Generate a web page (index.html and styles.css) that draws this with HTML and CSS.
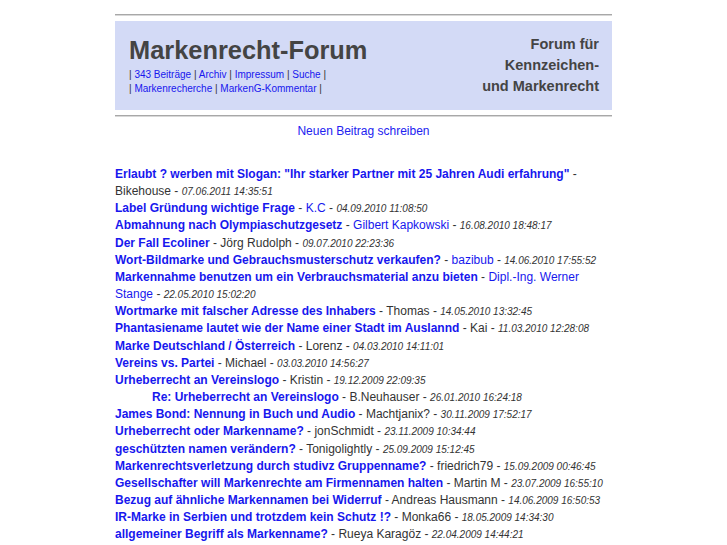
FILE: index.html
```html
<!DOCTYPE html>
<html lang="de">
<head>
<meta charset="utf-8">
<title>Markenrecht-Forum</title>
<link rel="stylesheet" href="styles.css">
</head>
<body>
<div class="page">
  <div class="rule"></div>
  <div class="header">
    <div class="brand">
      <div class="title">Markenrecht-Forum</div>
      <div class="nav">| <a href="#">343 Beiträge</a> | <a href="#">Archiv</a> | <a href="#">Impressum</a> | <a href="#">Suche</a> |<br>| <a href="#">Markenrecherche</a> | <a href="#">MarkenG-Kommentar</a> |</div>
    </div>
    <div class="tagline">Forum für<br>Kennzeichen-<br>und Markenrecht</div>
  </div>
  <div class="rule"></div>
  <div class="new"><a href="#">Neuen Beitrag schreiben</a></div>
  <ul class="posts">
    <li><a class="t" href="#">Erlaubt ? werben mit Slogan: "Ihr starker Partner mit 25 Jahren Audi erfahrung"</a> - Bikehouse - <i>07.06.2011 14:35:51</i></li>
    <li><a class="t" href="#">Label Gründung wichtige Frage</a> - <a href="#">K.C</a> - <i>04.09.2010 11:08:50</i></li>
    <li><a class="t" href="#">Abmahnung nach Olympiaschutzgesetz</a> - <a href="#">Gilbert Kapkowski</a> - <i>16.08.2010 18:48:17</i></li>
    <li><a class="t" href="#">Der Fall Ecoliner</a> - Jörg Rudolph - <i>09.07.2010 22:23:36</i></li>
    <li><a class="t" href="#">Wort-Bildmarke und Gebrauchsmusterschutz verkaufen?</a> - <a href="#">bazibub</a> - <i>14.06.2010 17:55:52</i></li>
    <li><a class="t" href="#">Markennahme benutzen um ein Verbrauchsmaterial anzu bieten</a> - <a href="#">Dipl.-Ing. Werner Stange</a> - <i>22.05.2010 15:02:20</i></li>
    <li><a class="t" href="#">Wortmarke mit falscher Adresse des Inhabers</a> - Thomas - <i>14.05.2010 13:32:45</i></li>
    <li><a class="t" href="#">Phantasiename lautet wie der Name einer Stadt im Auslannd</a> - Kai - <i>11.03.2010 12:28:08</i></li>
    <li><a class="t" href="#">Marke Deutschland / Österreich</a> - Lorenz - <i>04.03.2010 14:11:01</i></li>
    <li><a class="t" href="#">Vereins vs. Partei</a> - Michael - <i>03.03.2010 14:56:27</i></li>
    <li><a class="t" href="#">Urheberrecht an Vereinslogo</a> - Kristin - <i>19.12.2009 22:09:35</i></li>
    <li class="reply"><a class="t" href="#">Re: Urheberrecht an Vereinslogo</a> - B.Neuhauser - <i>26.01.2010 16:24:18</i></li>
    <li><a class="t" href="#">James Bond: Nennung in Buch und Audio</a> - Machtjanix? - <i>30.11.2009 17:52:17</i></li>
    <li><a class="t" href="#">Urheberrecht oder Markenname?</a> - jonSchmidt - <i>23.11.2009 10:34:44</i></li>
    <li><a class="t" href="#">geschützten namen verändern?</a> - Tonigolightly - <i>25.09.2009 15:12:45</i></li>
    <li><a class="t" href="#">Markenrechtsverletzung durch studivz Gruppenname?</a> - friedrich79 - <i>15.09.2009 00:46:45</i></li>
    <li><a class="t" href="#">Gesellschafter will Markenrechte am Firmennamen halten</a> - Martin M - <i>23.07.2009 16:55:10</i></li>
    <li><a class="t" href="#">Bezug auf ähnliche Markennamen bei Widerruf</a> - Andreas Hausmann - <i>14.06.2009 16:50:53</i></li>
    <li><a class="t" href="#">IR-Marke in Serbien und trotzdem kein Schutz !?</a> - Monka66 - <i>18.05.2009 14:34:30</i></li>
    <li><a class="t" href="#">allgemeiner Begriff als Markenname?</a> - Rueya Karagöz - <i>22.04.2009 14:44:21</i></li>
  </ul>
</div>
</body>
</html>
```

FILE: styles.css
```css
html, body {
  margin: 0;
  padding: 0;
  background: #fff;
}
body {
  font-family: "Liberation Sans", Arial, sans-serif;
  color: #333;
}
a {
  color: #1717ee;
  text-decoration: none;
}
.page {
  width: 497px;
  margin: 0 auto;
  padding-top: 14px;
}
.rule {
  border-top: 1px solid #a8a8a8;
  border-bottom: 1px solid #d8d8d8;
  height: 0;
}
.header {
  margin: 5px 0 5px;
  background: #d3daf6;
  height: 89px;
  display: flex;
  justify-content: space-between;
  align-items: center;
  padding: 0 13px 0 14px;
}
.title {
  font-size: 25.4px;
  font-weight: bold;
  color: #444;
  line-height: 30px;
}
.nav {
  font-size: 10px;
  line-height: 14px;
  margin-top: 3px;
  color: #333;
}
.tagline {
  text-align: right;
  font-size: 14.5px;
  font-weight: bold;
  color: #444;
  line-height: 21px;
}
.new {
  text-align: center;
  font-size: 12px;
  margin-top: 6px;
  line-height: 16px;
}
.new a {
  color: #2222f0;
}
.posts {
  list-style: none;
  margin: 27px 0 0;
  padding: 0;
  font-size: 12px;
  line-height: 17.15px;
}
.posts a.t {
  font-weight: bold;
  font-size: 12px;
}
.posts i {
  font-size: 10px;
}
.posts li.reply {
  padding-left: 37px;
}
```
